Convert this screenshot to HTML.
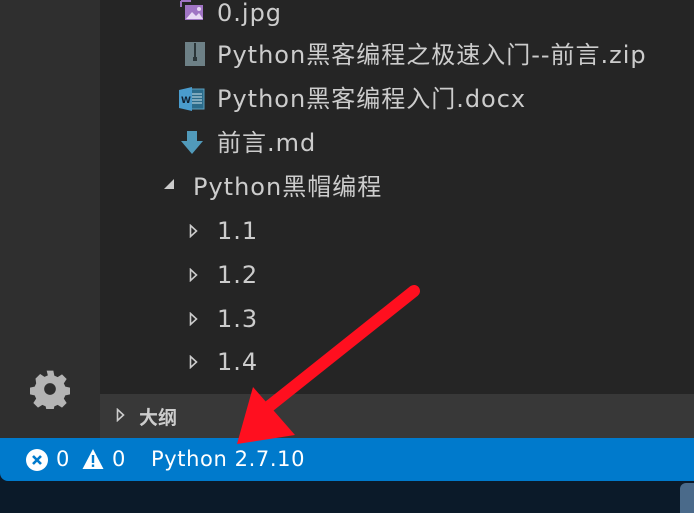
<!DOCTYPE html>
<html><head><meta charset="utf-8"><style>
body{margin:0;width:694px;height:510px;overflow:hidden;background:#0b1a29;position:relative;font-family:"DejaVu Sans","Noto Sans CJK SC",sans-serif}
.act{position:absolute;left:0;top:0;width:100px;height:438px;background:#2f2f2f}
.side{position:absolute;left:100px;top:0;width:594px;height:394px;background:#252525}
.outline{position:absolute;left:100px;top:394px;width:594px;height:44px;background:#383838;color:#ccc;font-size:19px;font-weight:bold}
.status{position:absolute;left:0;top:438px;width:694px;height:43px;background:#007acc;border-bottom-left-radius:8px;color:#fff;font-size:21px;letter-spacing:0.6px}
.row{position:absolute;color:#ccc;font-size:24px;letter-spacing:1px;line-height:30px;white-space:nowrap}
</style></head><body>
<div class="act">
<svg style="position:absolute;left:30px;top:369px" width="40" height="40" viewBox="0 0 24 24"><path fill="#b4b4b4" d="M10 1h4l.6 3 2 .9 2.6-1.7 2.8 2.8-1.7 2.6.9 2 3 .6v4l-3 .6-.9 2 1.7 2.6-2.8 2.8-2.6-1.7-2 .9-.6 3h-4l-.6-3-2-.9-2.6 1.7-2.8-2.8 1.7-2.6-.9-2-3-.6v-4l3-.6.9-2L3.3 5.8l2.8-2.8 2.6 1.7 2-.9zM12 8.5a3.5 3.5 0 1 0 0 7 3.5 3.5 0 1 0 0-7z"/></svg>
</div>
<div class="side"></div>
<svg style="position:absolute;left:180px;top:0" width="24" height="22"><path d="M1 1h10M1 1v6" stroke="#a074c4" stroke-width="2"/><rect x="5" y="5" width="18" height="15" fill="#a074c4"/><path d="M6 19l6-7 4 4 3-3 4 6z" fill="#e8d8f4"/><circle cx="19" cy="9" r="2" fill="#e8d8f4"/></svg>
<svg style="position:absolute;left:185px;top:41px" width="22" height="26"><rect x="0" y="1" width="20" height="24" fill="#6d8086"/><rect x="9" y="2" width="2" height="14" fill="#2a3538"/><rect x="8" y="16" width="4" height="4" fill="#2a3538"/></svg>
<svg style="position:absolute;left:178px;top:86px" width="28" height="26"><rect x="10" y="3" width="16" height="20" fill="#2b6b8a" stroke="#5ba0c0"/><path d="M13 8h11M13 11h11M13 14h11M13 17h11" stroke="#cfe4ef"/><path d="M1 4l13-3v24l-13-3z" fill="#4a9ccd"/><text x="3" y="17" font-size="9" font-weight="bold" fill="#123">W</text></svg>
<svg style="position:absolute;left:180px;top:130px" width="24" height="26"><path d="M7 1h10v10h6l-11 13-11-13h6z" fill="#519aba"/></svg>
<div class="row" style="left:217px;top:-2px">0.jpg</div>
<div class="row" style="left:217px;top:40px">Python黑客编程之极速入门--前言.zip</div>
<div class="row" style="left:217px;top:84px">Python黑客编程入门.docx</div>
<div class="row" style="left:217px;top:128px">前言.md</div>
<svg style="position:absolute;left:164px;top:178px" width="12" height="12"><path d="M10 1v10H0z" fill="#ccc"/></svg>
<div class="row" style="left:193px;top:172px">Python黑帽编程</div>
<svg style="position:absolute;left:189px;top:224px" width="10" height="14"><path d="M1.5 1.5l6 5.5-6 5.5z" fill="none" stroke="#ccc" stroke-width="1.6"/></svg>
<div class="row" style="left:217px;top:216px">1.1</div>
<svg style="position:absolute;left:189px;top:268px" width="10" height="14"><path d="M1.5 1.5l6 5.5-6 5.5z" fill="none" stroke="#ccc" stroke-width="1.6"/></svg>
<div class="row" style="left:217px;top:260px">1.2</div>
<svg style="position:absolute;left:189px;top:312px" width="10" height="14"><path d="M1.5 1.5l6 5.5-6 5.5z" fill="none" stroke="#ccc" stroke-width="1.6"/></svg>
<div class="row" style="left:217px;top:304px">1.3</div>
<svg style="position:absolute;left:189px;top:355px" width="10" height="14"><path d="M1.5 1.5l6 5.5-6 5.5z" fill="none" stroke="#ccc" stroke-width="1.6"/></svg>
<div class="row" style="left:217px;top:347px">1.4</div>
<div class="outline">
<svg style="position:absolute;left:16px;top:14px" width="10" height="14"><path d="M1.5 1.5l6 5.5-6 5.5z" fill="none" stroke="#ccc" stroke-width="1.6"/></svg>
<span style="position:absolute;left:39px;top:9px">大纲</span></div>
<div class="status">
<svg style="position:absolute;left:26px;top:11px" width="22" height="22"><circle cx="11" cy="11" r="11" fill="#fff"/><path d="M7 7l8 8M15 7l-8 8" stroke="#007acc" stroke-width="2.6"/></svg>
<span style="position:absolute;left:56px;top:9px">0</span>
<svg style="position:absolute;left:82px;top:10px" width="22" height="22"><path d="M11 1l10.5 20H.5z" fill="#fff"/><rect x="9.8" y="7" width="2.4" height="8" fill="#007acc"/><rect x="9.8" y="16.5" width="2.4" height="2.4" fill="#007acc"/></svg>
<span style="position:absolute;left:112px;top:9px">0</span>
<span style="position:absolute;left:151px;top:9px">Python 2.7.10</span>
</div>
<div style="position:absolute;left:680px;top:483px;width:20px;height:30px;background:#4a6a8a;border-radius:6px 0 0 0"></div>
<svg style="position:absolute;left:0;top:0" width="694" height="510"><path d="M414 291L262 412" stroke="#ff0f1f" stroke-width="12" stroke-linecap="round"/><path d="M237 444L253 387 295 435z" fill="#ff0f1f"/></svg>
</body></html>
